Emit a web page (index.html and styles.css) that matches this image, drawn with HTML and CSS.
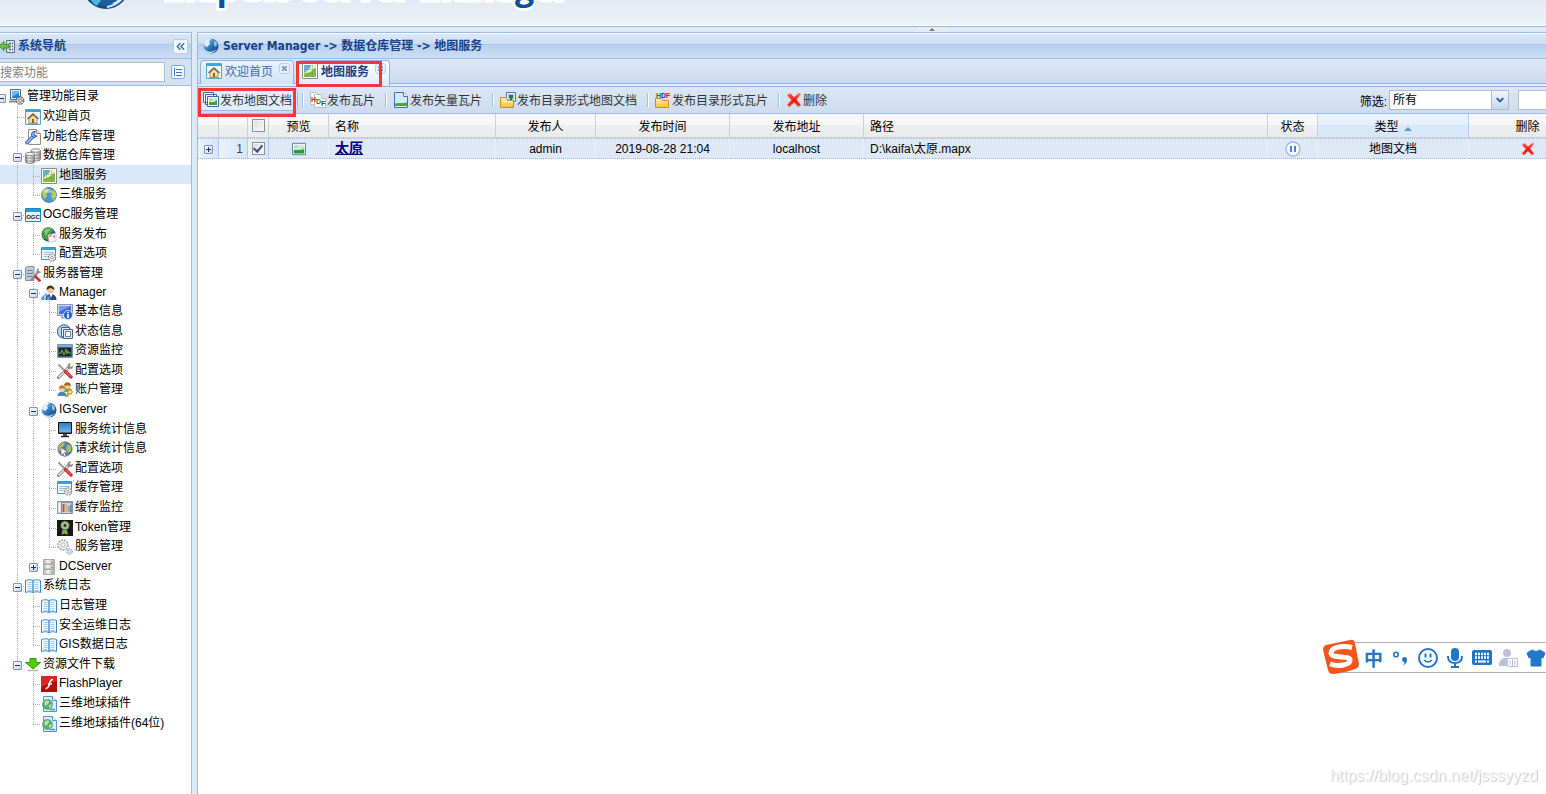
FILE: index.html
```html
<!DOCTYPE html>
<html lang="zh-CN">
<head>
  <meta charset="UTF-8" />
  <meta name="viewport" content="width=device-width, initial-scale=1.0"/>
  <title>MapGIS Server Manager</title>
  <link rel="stylesheet" href="styles.css">
</head>
<body>
  <!-- icon sprite -->
  <svg class="sprite" aria-hidden="true">
    <defs>
      <linearGradient id="g-globe" x1="0" y1="0" x2="1" y2="1"><stop offset="0" stop-color="#b9dcf6"/><stop offset=".5" stop-color="#2f78bd"/><stop offset="1" stop-color="#0d3a78"/></linearGradient>
      <linearGradient id="g-metal" x1="0" y1="0" x2="1" y2="0"><stop offset="0" stop-color="#8c8c8c"/><stop offset=".4" stop-color="#f4f4f4"/><stop offset="1" stop-color="#8f8f8f"/></linearGradient>
      <linearGradient id="g-rack" x1="0" y1="0" x2="1" y2="0"><stop offset="0" stop-color="#b5b5b5"/><stop offset=".4" stop-color="#f4f4f4"/><stop offset="1" stop-color="#adadad"/></linearGradient>
      <linearGradient id="g-folder" x1="0" y1="0" x2="0" y2="1"><stop offset="0" stop-color="#fff3b0"/><stop offset="1" stop-color="#f3bf3c"/></linearGradient>
      <linearGradient id="g-screen" x1="0" y1="0" x2="0" y2="1"><stop offset="0" stop-color="#2f7fc4"/><stop offset="1" stop-color="#6ab8f2"/></linearGradient>
      <linearGradient id="g-red" x1="0" y1="0" x2="0" y2="1"><stop offset="0" stop-color="#ff6b5c"/><stop offset=".5" stop-color="#f5160c"/><stop offset="1" stop-color="#e8392e"/></linearGradient>
    </defs>
    <symbol id="i-root" viewBox="0 0 16 16">
      <path d="M1.500.5h10v10h-10z" fill="#e8edf3" stroke="#5f6b7a"/><path d="M3 2h7v7H3z" fill="#1c7be0"/><path d="M3 2h7v2L3 8z" fill="#6cb6fa"/><path d="M0 12.500h8" stroke="#7d8a9a" stroke-width="2"/>
      <circle cx="11" cy="11.500" r="3.700" fill="#d7d7d7" stroke="#666" stroke-width="1.400" stroke-dasharray="2 1"/><circle cx="11" cy="11.500" r="1.500" fill="#fff" stroke="#777"/>
    </symbol>
    <symbol id="i-home" viewBox="0 0 16 16">
      <path d="M.5.5h15v15H.5z" fill="#eef5f9" stroke="#5ba0c8"/><path d="M1 1h14v2H1z" fill="#3ba4de"/><path d="M4 9.500V14h8V9.500L8 6z" fill="#f5e0a4" stroke="#a08a60" stroke-width=".8"/><path d="M2.500 10 8 5l5.500 5" fill="none" stroke="#7b603f" stroke-width="1.500"/><path d="M7 10h2v4H7z" fill="#8f5f2c"/><path d="M3 14.500h10" stroke="#8fae7c"/>
    </symbol>
    <symbol id="i-wrench" viewBox="0 0 16 16">
      <path d="M3.500.5h8l4 4v11h-12z" fill="#fcfcfc" stroke="#8e8e8e"/><path d="M11.500.5v4h4" fill="#e3e3e3" stroke="#8e8e8e"/><path d="M2 13.500 7.500 8" stroke="#2e5c9e" stroke-width="3.600" stroke-linecap="round"/><path d="M2 13.500 7.500 8" stroke="#8fbcf0" stroke-width="1.800" stroke-linecap="round"/><path d="M10.500 2.500a3 3 0 1 0 1.500 4.500L9.500 6.500 9 4.500z" fill="#8db6e8" stroke="#2e5c9e"/>
    </symbol>
    <symbol id="i-db" viewBox="0 0 16 16">
      <g stroke="#777" stroke-width=".8" fill="url(#g-metal)"><path d="M6 2.500v9c0 2 9.500 2 9.500 0v-9"/><ellipse cx="10.700" cy="2.500" rx="4.700" ry="1.800" fill="#eee"/><path d="M6 6c1 1.700 9 1.700 9.500 0M6 9c1 1.700 9 1.700 9.500 0" fill="none"/><path d="M.5 6v8c0 2 9 2 9 0V6"/><ellipse cx="5" cy="6" rx="4.500" ry="1.700" fill="#f5f5f5"/><path d="M.5 9c1 1.700 8 1.700 9 0M.5 12c1 1.700 8 1.700 9 0" fill="none"/></g>
    </symbol>
    <symbol id="i-map" viewBox="0 0 16 16">
      <path d="M.5.500h15v15H.5z" fill="#fff" stroke="#8b8b8b"/><path d="M2 2h12v12H2z" fill="#82bb46"/><path d="M2 2h7c0 3-1 4-3 5S4 9 2 10z" fill="#66aee8"/><path d="M9 2h5v3c-3 0-3 3-6 4s-3 2-6 2v-1c3-1 2-3 4-3.500S9 4 9 2z" fill="#f4efb8"/><path d="M5.500 2v12M10.500 2v12M2 6.500h12M2 10.500h12" stroke="#5f9a3a" stroke-width=".5" opacity=".7"/>
    </symbol>
    <symbol id="i-earth" viewBox="0 0 16 16">
      <circle cx="8" cy="8" r="7.500" fill="#4a97dc" stroke="#44749f" stroke-width=".8"/><path d="M2 4c2-3 5-3 6-2l-1 3-2 1 1 3-2 3C1 10 .5 7 2 4zM9 4l4-1c2 2 2.500 5 2 7l-3 3-2-4 1-2z" fill="#b5cf4e"/><ellipse cx="6.500" cy="4" rx="4" ry="2" fill="#fff" opacity=".4"/>
    </symbol>
    <symbol id="i-ogc" viewBox="0 0 16 16">
      <path d="M.5 1.500h15v13H.5z" fill="#f3f3f3" stroke="#1787bd"/><path d="M1 2h14v3H1z" fill="#1ba0dd"/><text class="glyph" x="8" y="12" font-size="6" text-anchor="middle" fill="#222">OGC</text>
    </symbol>
    <symbol id="i-publish" viewBox="0 0 16 16">
      <circle cx="7.500" cy="7.500" r="7" fill="#24549c"/><path d="M2 3C5-1 10 0 13 3L10 6 7 13 2 11C0 7 1 5 2 3z" fill="#4a9c3b"/><path d="M3 4c2-3 5-3 7-2L7 5 5 9z" fill="#8cca70"/><path d="m7 8 8-2v8l-7 1.500z" fill="#f8f8f8" stroke="#aaa" stroke-width=".6"/><path d="m8.500 9.500 2-1M12.500 8.500l1 2" stroke="#d33" stroke-width="1.200"/>
    </symbol>
    <symbol id="i-option" viewBox="0 0 16 16">
      <path d="M.5 1.500h14v12H.5z" fill="#f7fafc" stroke="#3f94c5"/><path d="M1 2h13v2H1z" fill="#35a4dd"/><path d="M2.500 6.500h10M2.500 8.500h6M2.500 10.500h4" stroke="#9dbdd2"/><circle cx="11" cy="11.500" r="3.600" fill="#e6e6e6" stroke="#888" stroke-width="1.200" stroke-dasharray="1.700 1"/><circle cx="11" cy="11.500" r="1.200" fill="#fff" stroke="#888" stroke-width=".7"/>
    </symbol>
    <symbol id="i-server" viewBox="0 0 16 16">
      <path d="M.5 1.500 3 .5h6v14H.5z" fill="#b9cadb" stroke="#7f92a6"/><path d="M2 4.500h5.500M2 7.500h5.500M2 10.500h5.500" stroke="#6d8298"/><path d="m6 14.500 8-9.500" stroke="#8a8a8a" stroke-width="2"/><path d="M13.500 2.500 12 5.500l3.500 1" fill="none" stroke="#8a8a8a" stroke-width="1.500"/><path d="m7 6 3 4" stroke="#aaa" stroke-width="1.500"/><path d="m10.500 10.500 4 4" stroke="#d3312a" stroke-width="2.800" stroke-linecap="round"/>
    </symbol>
    <symbol id="i-manager" viewBox="0 0 16 16">
      <path d="M4.500 15c0-5 3-6 5.500-6s5.500 2 5.500 6z" fill="#2e4672"/><path d="m8.500 9 1.500 4 1.500-4z" fill="#fff"/><circle cx="9.500" cy="5" r="3.500" fill="#f3c39a"/><path d="M5.500 5c-.5-6 8-6 8 0-2-1-3-2-4-2s-2 1-4 2z" fill="#4e2e1c"/><path d="M2 13v-2h6v2M5 9v2" fill="none" stroke="#4482c7"/><circle cx="5" cy="9.500" r="1.300" fill="#5cc4e6"/><circle cx="2" cy="13.500" r="1.800" fill="#3f9fe0"/><circle cx="7.500" cy="13.500" r="1.800" fill="#3f9fe0"/>
    </symbol>
    <symbol id="i-info" viewBox="0 0 16 16">
      <path d="M.5.500h15v11H.5z" fill="#d0d6e2" stroke="#8c96a8"/><path d="M2 2h12v8H2z" fill="#4365df"/><path d="M2 2h12L2 8z" fill="#7798f4"/><path d="M4 13.500h5" stroke="#9aa3b2" stroke-width="2"/><circle cx="11" cy="11" r="4.500" fill="#2468ce" stroke="#dce8fa" stroke-width=".8"/><path d="M11 10v4M11 8v1.200" stroke="#fff" stroke-width="1.600"/>
    </symbol>
    <symbol id="i-status" viewBox="0 0 16 16">
      <circle cx="7" cy="7.500" r="6.700" fill="#b5d2f0" stroke="#315f9b"/><path d="M4.500 3.500h8v9h-8z" fill="#e3edf7" stroke="#4f6480"/><path d="M6.500 5.500h9v9h-9z" fill="#dfeaf5" stroke="#4f6480"/><path d="M8.500 7.500h5v5h-5z" fill="#fff" stroke="#6d7f98"/>
    </symbol>
    <symbol id="i-monitor" viewBox="0 0 16 16">
      <path d="M.5 1.500h15v13H.5z" fill="#4e5e70" stroke="#7897b5"/><path d="M1 2h14v2H1z" fill="#84a9cc"/><path d="M2 5h12v8H2z" fill="#20262b"/><path d="M2 10h2l1-3 2 5 2-6 1 5 1-3 1 2h2" fill="none" stroke="#36c65b"/><path d="m4 11 2-2 2 2 3-4" fill="none" stroke="#cf3d35" stroke-width=".7"/>
    </symbol>
    <symbol id="i-tools" viewBox="0 0 16 16">
      <path d="M1.500 14.500 12 4" stroke="#777" stroke-width="3" stroke-linecap="round"/><path d="M1.500 14.500 12 4" stroke="#eee" stroke-width="1.400"/><path d="M13.500.8 11.500 2v3h3L15.500 3" fill="none" stroke="#888" stroke-width="1.600"/><path d="m1.500 1.500 6.500 6.500" stroke="#999" stroke-width="2"/><path d="m8.500 8.500 5.500 5.500" stroke="#cf2f2f" stroke-width="3.400" stroke-linecap="round"/><path d="m9 8.500 5 5" stroke="#f59b94" stroke-width=".8"/>
    </symbol>
    <symbol id="i-users" viewBox="0 0 16 16">
      <path d="M6 10c0-6 9-6 9 0z" fill="#63ac4b"/><circle cx="10.500" cy="4" r="3" fill="#f3c696"/><path d="M7 4c0-5 7-5 7 0-2-1-5-1-7 0z" fill="#a2622a"/><path d="M.5 14c0-6 9-6 9 0z" fill="#4484cf"/><circle cx="5" cy="7" r="3" fill="#f7d2a5"/><path d="M1.800 7c0-5 6.500-5 6.500 0-2-1-5-1-6.500 0z" fill="#be762f"/><circle cx="13" cy="10" r="2.300" fill="#ffe07c" stroke="#b07f16"/><path d="m11.500 11.500-3 3.500M10 13l1.500 1.500" stroke="#c4912a" stroke-width="1.500"/>
    </symbol>
    <symbol id="i-globe" viewBox="0 0 16 16">
      <circle cx="8" cy="8" r="7.500" fill="url(#g-globe)"/><path d="M2 3c2-2 4-2.500 6-2L6 4l1 2-3 3-3-2z" fill="#eef6fc" opacity=".9"/><path d="m11 3 2.500 1c1 2 0 4-1 5l-1.500-2z" fill="#eef6fc" opacity=".6"/><path d="M.8 10c2 4 8 5.500 13 1-3 5.500-11 6-13-1z" fill="#fff" opacity=".8"/>
    </symbol>
    <symbol id="i-screen" viewBox="0 0 16 16">
      <path d="M1.500.5h13v11h-13z" fill="#1d1f22" stroke="#111"/><path d="M2 1h12v9.500H2z" fill="url(#g-screen)"/><path d="M6 12h4v2H6z" fill="#555"/><path d="M4 14.500h8" stroke="#222" stroke-width="1.500"/>
    </symbol>
    <symbol id="i-request" viewBox="0 0 16 16">
      <circle cx="8" cy="8" r="7.200" fill="#4e78b9" stroke="#777" stroke-width=".8"/><path d="M2 5c2-4 5-4 6-3L7 5 4 7 3 11 1 8zM10 3l4 2v5l-3 2-2-4z" fill="#a3bf5c"/><path d="M4 6.500v8l2-2 1.500 3 1.500-1-1.500-3 3-.5z" fill="#f4f4f4" stroke="#777" stroke-width=".6"/>
    </symbol>
    <symbol id="i-cachemon" viewBox="0 0 16 16">
      <path d="M.5 1.500h15v12H.5z" fill="#c7d3de" stroke="#8799aa"/><path d="M4.500 2.500h10v11h-10z" fill="#cfd6e0" stroke="#6e7988" stroke-width=".7"/><path d="M6.500 4v8" stroke="#c4503f" stroke-width="2"/><path d="M9 4v8" stroke="#e5b47c" stroke-width="2"/><path d="M11.500 6v6" stroke="#7fb382" stroke-width="2"/><path d="M13.500 5v7" stroke="#5a86c6" stroke-width="1.400"/><path d="M2.500 3v9" stroke="#f4f7fa" stroke-width="2"/>
    </symbol>
    <symbol id="i-token" viewBox="0 0 16 16">
      <path d="M0 0h16v16H0z" fill="#171717"/><path d="m5.500 10-1 5 3-1.500 3.500 1.500-1-5z" fill="#78b832"/><circle cx="8" cy="5.500" r="4" fill="#b8c4ab" stroke="#6f8d58" stroke-width="1.400" stroke-dasharray="1.500 1"/><circle cx="8" cy="5.500" r="2" fill="#303030" stroke="#94c35c"/>
    </symbol>
    <symbol id="i-gears" viewBox="0 0 16 16">
      <circle cx="6" cy="6" r="5" fill="#eef1f4" stroke="#9aa8b5" stroke-width="1.500" stroke-dasharray="2.200 .8"/><circle cx="6" cy="6" r="2.200" fill="#fff" stroke="#a6b2be"/><circle cx="12.500" cy="12.500" r="2.800" fill="#e6edf4" stroke="#8097ae" stroke-dasharray="1.600 .7"/><circle cx="12.500" cy="12.500" r="1" fill="#fff" stroke="#8097ae" stroke-width=".6"/>
    </symbol>
    <symbol id="i-rack" viewBox="0 0 16 16">
      <path d="M2.500.5h11v4.500h-11zM2.500 5.500h11V10h-11zM2.500 10.500h11v5h-11z" fill="url(#g-rack)" stroke="#a9a9a9"/><path d="M10 3.500h2M10 8.500h2M10 13.500h2" stroke="#6fb562"/>
    </symbol>
    <symbol id="i-book" viewBox="0 0 16 16">
      <path d="M.5 2.500c2.500-1 5-1 7.500 0 2.500-1 5-1 7.500 0v12c-2.500-1-5-1-7.500 0-2.500-1-5-1-7.500 0z" fill="#f4faff" stroke="#3787cb"/><path d="M8 3v11" stroke="#3787cb" stroke-width="1.300"/><path d="M2.500 4.500h4M2.500 6.500h4M2.500 8.500h4M2.500 10.500h4M2.500 12.500h4M9.500 4.500h4M9.500 6.500h4M9.500 8.500h4M9.500 10.500h4M9.500 12.500h4" stroke="#a4cdf0"/>
    </symbol>
    <symbol id="i-download" viewBox="0 0 16 16">
      <path d="M5 1.500h6v4h4.500L8 12 .5 5.500H5z" fill="#4fd000" stroke="#369400"/><path d="M3 13.500h10" stroke="#b5b5b5" stroke-width="1.500"/>
    </symbol>
    <symbol id="i-flash" viewBox="0 0 16 16">
      <path d="M0 0h16v16H0z" fill="#b40c0c"/><path d="M0 0h16v5L0 11z" fill="#cf2a24"/><path d="M12 3.500c-4 0-3 4.500-4.500 7-.7 1.500-1.500 2-3 2M7 8h4" fill="none" stroke="#fff" stroke-width="1.700"/>
    </symbol>
    <symbol id="i-plugin" viewBox="0 0 16 16">
      <path d="M2.500.5h9l4 4v11h-13z" fill="#dceefb" stroke="#4b97d1"/><path d="M11.500.5v4h4" fill="#fff" stroke="#4b97d1"/><circle cx="6.500" cy="8.500" r="5" fill="#57b05d" stroke="#5f97a4" stroke-width=".8"/><path d="M3.500 6c2-2 4-1.500 5-1L7 8l-3 2zM8 9l3-1-1 3-2 1z" fill="#b4e3b0"/><path d="M9 13.500h5" stroke="#4b97d1" stroke-width="1.500"/>
    </symbol>
    <symbol id="i-nav" viewBox="0 0 16 16">
      <path d="M6.500 2.500h8v12h-8z" fill="#dae2ec" stroke="#5b7088"/><path d="M9 5.500h4M9 8.500h4M9 11.500h4" stroke="#4a5f78" stroke-width="1.400"/><path d="M11.500 3v11" stroke="#e4ebf2"/><path d="M9 6.500H4v-3L-1 8l5 4.500V10h5z" fill="#6bbd4d" stroke="#438d2d"/>
    </symbol>
    <symbol id="i-pic" viewBox="0 0 16 16">
      <path d="M.5 1.500h15v13H.5z" fill="#fff" stroke="#3c7d8d"/><path d="M2 3h12v10H2z" fill="#c8e8fb"/><path d="M2 9c4 0 7 1 12-2v6H2z" fill="#2f9b33"/><path d="M7 9c3-1 5-2 7-4v3c-2 1-4 1.500-7 1z" fill="#c9e05a"/><circle cx="4.500" cy="5.500" r="1.500" fill="#f6cf38"/>
    </symbol>
    <symbol id="i-pics" viewBox="0 0 16 16">
      <path d="M.5.5h10v10H.5zM2.500 2.500h11v10h-11z" fill="#f1f7fc" stroke="#336ea7"/><path d="M4.500 4.500h11v10h-11z" fill="#fff" stroke="#336ea7"/><path d="M6 6h8v7H6z" fill="#c8e8fb"/><path d="M6 10c3 0 5 1 8-2v5H6z" fill="#3da23d"/><circle cx="8" cy="7.800" r="1.300" fill="#f4be2d"/>
    </symbol>
    <symbol id="i-hdf" viewBox="0 0 16 16">
      <path d="M.5.5H6l3 3v9H.5z" fill="#fff" stroke="#bbb"/><path d="M4.500 2.500h7l4 4v9h-11z" fill="#fff" stroke="#bbb"/><path d="M11.500 2.500v4h4" fill="#ececec" stroke="#bbb"/><text class="glyph" x="1" y="10" font-size="7" fill="#c02a22">H</text><text class="glyph" x="6" y="12" font-size="7" fill="#2f7a2a">D</text><text class="glyph" x="11" y="14" font-size="7" fill="#273ea4">F</text>
    </symbol>
    <symbol id="i-vector" viewBox="0 0 16 16">
      <path d="M1.500.5h9l4 4v11h-13z" fill="#d7eafd" stroke="#3a73b8"/><path d="M10.500.5v4h4" fill="#fff" stroke="#3a73b8"/><path d="M2 11.500c4-1 8 0 12-1V14H2z" fill="#4fa53c"/><path d="M2 14.500h12" stroke="#e9f6e0"/>
    </symbol>
    <symbol id="i-folderpic" viewBox="0 0 16 16">
      <path d="M6.500.5h9v9h-9z" fill="#e8f2fb" stroke="#4b78b2"/><path d="M8 2h6v6H8z" fill="#9fcdf0"/><path d="M9 3h4v3H9zM10 6h2v2h-2z" fill="#2f7d33"/><path d="M.5 5.500v10h13v-7h-6l-1-3z" fill="url(#g-folder)" stroke="#c98d26"/><path d="M4 9.500h9" stroke="#fffbe0"/>
    </symbol>
    <symbol id="i-folderhdf" viewBox="0 0 16 16">
      <path d="M.5 6.500v9h13v-7h-6l-1-2z" fill="url(#g-folder)" stroke="#c98d26"/><text class="glyph" x="1" y="6" font-size="7" fill="#1c7c1a">H</text><text class="glyph" x="6" y="6" font-size="7" fill="#1428c0">D</text><text class="glyph" x="11" y="6" font-size="7" fill="#e0120b">F</text>
    </symbol>
    <symbol id="i-delete" viewBox="0 0 16 16">
      <path d="M1 3.500 4 1l4 4L13 1l2 1L10.500 7.500 15 13l-2.500 2L8 10.500 3.500 15 1 13l4.500-5z" fill="url(#g-red)" stroke="#f0a29b" stroke-width=".5"/>
    </symbol>
    <symbol id="i-pause" viewBox="0 0 16 16">
      <circle cx="8" cy="8" r="7" fill="#f6faff" stroke="#9bb9e0" stroke-width="1.300"/><path d="M6 5v6M10 5v6" stroke="#4c86d0" stroke-width="2"/>
    </symbol>
  </svg>

  <header class="banner">
    <svg class="logo" viewBox="0 0 46 46" aria-hidden="true"><circle cx="23" cy="23" r="23" fill="#174b8d"/><circle cx="23" cy="23" r="20" fill="#1c5c9f"/><path d="M6 28c6-3 8 4 12 6 2 3-3 6-4 9C9 40 5 35 6 28z" fill="#49b9df"/><path d="M24 44c8-1 14-6 19-13M30 41c5-2 9-6 11-11" fill="none" stroke="#d5ecf8" stroke-width="2"/></svg>
    <h1>MapGIS Server Manager</h1>
  </header>
  <div class="split-top"><button class="collapse-top" type="button" aria-label="折叠"></button></div>

  <div class="viewport">
    <aside class="sidebar">
      <div class="panel-head">
        <svg class="icon"><use href="#i-nav"/></svg>
        <h2>系统导航</h2>
        <button class="collapse" type="button" aria-label="收起"><svg viewBox="0 0 14 14"><path d="M7 3.500 3.500 7 7 10.500M11 3.500 7.500 7l3.500 3.500" fill="none" stroke="#3b68ac" stroke-width="1.500"/></svg></button>
      </div>
      <div class="search">
        <input type="text" placeholder="搜索功能" aria-label="搜索功能">
        <button type="button" aria-label="列表"><svg viewBox="0 0 14 14"><rect x=".5" y=".5" width="13" height="13" rx="2" fill="#f5f9fe" stroke="#8aa5ce"/><path d="M3.500 3v8M5 4.500h6M5 7.500h6M5 10.500h6" stroke="#4478bd"/></svg></button>
      </div>
      <ul class="tree">
        <li><i class="box"></i><svg class="icon"><use href="#i-root"/></svg><a href="#">管理功能目录</a></li>
        <li><i></i><i class="tee"></i><svg class="icon"><use href="#i-home"/></svg><a href="#">欢迎首页</a></li>
        <li><i></i><i class="tee"></i><svg class="icon"><use href="#i-wrench"/></svg><a href="#">功能仓库管理</a></li>
        <li><i></i><i class="tee box"></i><svg class="icon"><use href="#i-db"/></svg><a href="#">数据仓库管理</a></li>
        <li class="selected"><i></i><i class="line"></i><i class="tee"></i><svg class="icon"><use href="#i-map"/></svg><a href="#">地图服务</a></li>
        <li><i></i><i class="line"></i><i class="end"></i><svg class="icon"><use href="#i-earth"/></svg><a href="#">三维服务</a></li>
        <li><i></i><i class="tee box"></i><svg class="icon"><use href="#i-ogc"/></svg><a href="#">OGC服务管理</a></li>
        <li><i></i><i class="line"></i><i class="tee"></i><svg class="icon"><use href="#i-publish"/></svg><a href="#">服务发布</a></li>
        <li><i></i><i class="line"></i><i class="end"></i><svg class="icon"><use href="#i-option"/></svg><a href="#">配置选项</a></li>
        <li><i></i><i class="tee box"></i><svg class="icon"><use href="#i-server"/></svg><a href="#">服务器管理</a></li>
        <li><i></i><i class="line"></i><i class="tee box"></i><svg class="icon"><use href="#i-manager"/></svg><a href="#">Manager</a></li>
        <li><i></i><i class="line"></i><i class="line"></i><i class="tee"></i><svg class="icon"><use href="#i-info"/></svg><a href="#">基本信息</a></li>
        <li><i></i><i class="line"></i><i class="line"></i><i class="tee"></i><svg class="icon"><use href="#i-status"/></svg><a href="#">状态信息</a></li>
        <li><i></i><i class="line"></i><i class="line"></i><i class="tee"></i><svg class="icon"><use href="#i-monitor"/></svg><a href="#">资源监控</a></li>
        <li><i></i><i class="line"></i><i class="line"></i><i class="tee"></i><svg class="icon"><use href="#i-tools"/></svg><a href="#">配置选项</a></li>
        <li><i></i><i class="line"></i><i class="line"></i><i class="end"></i><svg class="icon"><use href="#i-users"/></svg><a href="#">账户管理</a></li>
        <li><i></i><i class="line"></i><i class="tee box"></i><svg class="icon"><use href="#i-globe"/></svg><a href="#">IGServer</a></li>
        <li><i></i><i class="line"></i><i class="line"></i><i class="tee"></i><svg class="icon"><use href="#i-screen"/></svg><a href="#">服务统计信息</a></li>
        <li><i></i><i class="line"></i><i class="line"></i><i class="tee"></i><svg class="icon"><use href="#i-request"/></svg><a href="#">请求统计信息</a></li>
        <li><i></i><i class="line"></i><i class="line"></i><i class="tee"></i><svg class="icon"><use href="#i-tools"/></svg><a href="#">配置选项</a></li>
        <li><i></i><i class="line"></i><i class="line"></i><i class="tee"></i><svg class="icon"><use href="#i-option"/></svg><a href="#">缓存管理</a></li>
        <li><i></i><i class="line"></i><i class="line"></i><i class="tee"></i><svg class="icon"><use href="#i-cachemon"/></svg><a href="#">缓存监控</a></li>
        <li><i></i><i class="line"></i><i class="line"></i><i class="tee"></i><svg class="icon"><use href="#i-token"/></svg><a href="#">Token管理</a></li>
        <li><i></i><i class="line"></i><i class="line"></i><i class="end"></i><svg class="icon"><use href="#i-gears"/></svg><a href="#">服务管理</a></li>
        <li><i></i><i class="line"></i><i class="end box plus"></i><svg class="icon"><use href="#i-rack"/></svg><a href="#">DCServer</a></li>
        <li><i></i><i class="tee box"></i><svg class="icon"><use href="#i-book"/></svg><a href="#">系统日志</a></li>
        <li><i></i><i class="line"></i><i class="tee"></i><svg class="icon"><use href="#i-book"/></svg><a href="#">日志管理</a></li>
        <li><i></i><i class="line"></i><i class="tee"></i><svg class="icon"><use href="#i-book"/></svg><a href="#">安全运维日志</a></li>
        <li><i></i><i class="line"></i><i class="end"></i><svg class="icon"><use href="#i-book"/></svg><a href="#">GIS数据日志</a></li>
        <li><i></i><i class="end box"></i><svg class="icon"><use href="#i-download"/></svg><a href="#">资源文件下载</a></li>
        <li><i></i><i></i><i class="tee"></i><svg class="icon"><use href="#i-flash"/></svg><a href="#">FlashPlayer</a></li>
        <li><i></i><i></i><i class="tee"></i><svg class="icon"><use href="#i-plugin"/></svg><a href="#">三维地球插件</a></li>
        <li><i></i><i></i><i class="end"></i><svg class="icon"><use href="#i-plugin"/></svg><a href="#">三维地球插件(64位)</a></li>
      </ul>
    </aside>

    <main class="content">
      <div class="panel-head">
        <svg class="icon"><use href="#i-globe"/></svg>
        <h2>Server Manager -&gt; 数据仓库管理 -&gt; 地图服务</h2>
      </div>
      <nav class="tabs">
        <div class="tab"><svg class="icon"><use href="#i-home"/></svg><a href="#">欢迎首页</a><button type="button" class="close" aria-label="关闭"></button></div>
        <div class="tab active"><svg class="icon"><use href="#i-map"/></svg><a href="#">地图服务</a><button type="button" class="close" aria-label="关闭"></button></div>
        <span class="mark mark-tab"></span>
      </nav>
      <div class="toolbar">
        <button type="button" class="over"><svg class="icon"><use href="#i-pics"/></svg>发布地图文档</button>
        <button type="button"><svg class="icon"><use href="#i-hdf"/></svg>发布瓦片</button>
        <button type="button"><svg class="icon"><use href="#i-vector"/></svg>发布矢量瓦片</button>
        <button type="button"><svg class="icon"><use href="#i-folderpic"/></svg>发布目录形式地图文档</button>
        <button type="button"><svg class="icon"><use href="#i-folderhdf"/></svg>发布目录形式瓦片</button>
        <button type="button"><svg class="icon"><use href="#i-delete"/></svg>删除</button>
        <div class="filter">
          <label for="type">筛选:</label>
          <span class="combo">
            <select id="type"><option>所有</option><option>地图文档</option></select>
            <svg viewBox="0 0 17 18"><path d="m5 7 3.500 3.500L12 7" fill="none" stroke="#34568f" stroke-width="2"/></svg>
          </span>
          <input type="text" class="keyword" aria-label="关键字">
        </div>
        <span class="mark mark-btn"></span>
      </div>
      <table class="grid">
        <colgroup><col class="c-exp"><col class="c-num"><col class="c-exp"><col class="c-view"><col class="c-name"><col class="c-user"><col class="c-mid"><col class="c-mid"><col><col class="c-state"><col class="c-type"><col class="c-del"></colgroup>
        <thead>
          <tr><th></th><th></th><th><input type="checkbox" aria-label="全选"></th><th>预览</th><th class="left">名称</th><th>发布人</th><th>发布时间</th><th>发布地址</th><th class="left">路径</th><th>状态</th><th class="sorted">类型<span class="asc"></span></th><th>删除</th></tr>
        </thead>
        <tbody>
          <tr>
            <td class="special"><i class="box plus"></i></td>
            <td class="special num">1</td>
            <td class="special"><input type="checkbox" aria-label="选择 太原" checked></td>
            <td><svg class="icon"><use href="#i-pic"/></svg></td>
            <td class="left"><a class="name" href="#">太原</a></td>
            <td>admin</td>
            <td>2019-08-28 21:04</td>
            <td>localhost</td>
            <td class="left">D:\kaifa\太原.mapx</td>
            <td><svg class="icon big"><use href="#i-pause"/></svg></td>
            <td>地图文档</td>
            <td><svg class="icon"><use href="#i-delete"/></svg></td>
          </tr>
        </tbody>
      </table>
    </main>
  </div>

  <!-- input method bar -->
  <div class="ime">
    <svg class="ime-logo" viewBox="0 0 36 36"><path d="M3 6 27 1q4-1 5 3l4 21q0 4-4 5-10 4-22 5-4 0-5-4L0 11q0-4 3-5z" fill="#f4551d"/><path d="M29 8.500C18 6 8 9 8 14c0 6 19 2 19 7 0 5-11 7-20 4" fill="none" stroke="#fff" stroke-width="5"/></svg>
    <span class="ime-lang">中</span>
    <svg viewBox="0 0 20 20"><circle cx="5" cy="6.500" r="2.300" fill="none" stroke="#2176c7" stroke-width="1.600"/><path d="M11 11.500a2.500 2.500 0 1 1 5 0q0 4.500-4 6 1.700-2 1.400-3.500-2.400 0-2.400-2.500z" fill="#2176c7"/></svg>
    <svg viewBox="0 0 20 20"><circle cx="10" cy="10" r="9" fill="none" stroke="#2176c7" stroke-width="2"/><path d="M7.500 5.500v4M12.500 5.500v4" stroke="#2176c7" stroke-width="2"/><path d="M6 12q4 4 8 0" fill="none" stroke="#2176c7" stroke-width="1.600"/></svg>
    <svg viewBox="0 0 20 20"><rect x="6" y="0" width="8" height="13" rx="4" fill="#2176c7"/><path d="M3 8q0 7 7 7t7-7M10 15v4M6 19h8" fill="none" stroke="#2176c7" stroke-width="2"/></svg>
    <svg viewBox="0 0 20 20"><rect x="0" y="2" width="20" height="15" rx="2" fill="#2176c7"/><path d="M3 6h14M3 9.500h14" stroke="#fff" stroke-width="2.500" stroke-dasharray="2 1"/><path d="M3 13.500h2M6 13.500h8M15 13.500h2" stroke="#fff" stroke-width="2"/></svg>
    <svg viewBox="0 0 20 20"><circle cx="8" cy="5" r="4" fill="#b9c2d8"/><path d="M0 18q0-8 6-8h5v8z" fill="#b9c2d8"/><path d="M8.500 10.500h5v8h-5zM13.500 10.500h5v8h-5z" fill="#fff" stroke="#b9c2d8"/><path d="M10 13h1v4M15 13h1v4" fill="none" stroke="#b9c2d8"/></svg>
    <svg viewBox="0 0 20 20"><path d="M6 2q4 3 8 0l5 3-2 5-2-1v9H5V9l-2 1-2-5z" fill="#2176c7" stroke="#2176c7" stroke-linejoin="round"/></svg>
  </div>
  <div class="watermark">https://blog.csdn.net/jsssyyzd</div>
</body>
</html>
```
FILE: styles.css
```css
*,
*::before,
*::after {
  box-sizing: border-box;
}
body {
  margin: 0;
  height: 100vh;
  display: flex;
  flex-direction: column;
  overflow: hidden;
  background: #dfe8f6;
  font-family: "Liberation Sans", "Noto Sans CJK SC", sans-serif;
  font-size: 12px;
  color: #000;
}
a {
  color: inherit;
  text-decoration: none;
}
button {
  padding: 0;
  border: 0;
  background: none;
  font: inherit;
  color: inherit;
  cursor: pointer;
}
.sprite {
  position: absolute;
  width: 0;
  height: 0;
}
.icon {
  width: 16px;
  height: 16px;
  flex: none;
}
.glyph {
  font-family: "Liberation Sans", sans-serif;
  font-weight: bold;
}

/* banner */
.banner {
  flex: none;
  display: flex;
  align-items: flex-end;
  height: 26px;
  padding-left: 83px;
  overflow: hidden;
  background: linear-gradient(#e3eaf5, #edf1f8);
  border-bottom: 1px solid #fff;
}
.logo {
  flex: none;
  width: 46px;
  height: 46px;
  margin-bottom: 16px;
}
.banner h1 {
  margin: 0 0 16px 35px;
  font: bold 34px/44px "Open Sans", sans-serif;
  white-space: nowrap;
  color: #0a539c;
  -webkit-text-stroke: 5px #fff;
  paint-order: stroke fill;
}
.split-top {
  flex: none;
  display: flex;
  justify-content: center;
  height: 6px;
  padding-left: 317px;
  border-top: 1px solid #99bbe8;
}
.collapse-top {
  display: flex;
  align-items: center;
  justify-content: center;
  width: 35px;
  height: 5px;
  background: #e9edf0;
  clip-path: polygon(4px 0, 31px 0, 100% 100%, 0 100%);
}
.collapse-top::after {
  content: "";
  border: 3px solid transparent;
  border-top: 0;
  border-bottom-color: #777;
}

.viewport {
  flex: 1;
  display: flex;
  gap: 5px;
  min-height: 0;
}
.sidebar {
  flex: none;
  display: flex;
  flex-direction: column;
  width: 192px;
  background: #fff;
  border-top: 1px solid #99bbe8;
  border-right: 1px solid #99bbe8;
  overflow: hidden;
}
.content {
  flex: 1;
  min-width: 0;
  overflow: hidden;
  background: #fff;
  border-top: 1px solid #99bbe8;
  border-left: 1px solid #99bbe8;
}
.panel-head {
  flex: none;
  display: flex;
  align-items: center;
  gap: 4px;
  height: 26px;
  padding: 0 3px 0 5px;
  border-top: 1px solid #fff;
  border-bottom: 1px solid #99bbe8;
  background: linear-gradient(#dae7f6 0, #cddef3 10px, #abc7ec 10px, #abc7ec 11px, #b8cfee 11px, #cddef3 100%);
  color: #15428b;
}
.panel-head h2 {
  flex: 1;
  margin: 0;
  font: bold 12px/16px "DejaVu Sans Condensed", "Noto Sans CJK SC", sans-serif;
}
.sidebar .panel-head {
  padding-left: 0;
  gap: 2px;
}
.collapse {
  width: 15px;
  height: 15px;
  border: 1px solid #b5cdf0;
  border-radius: 2px;
  background: #f3f8fe;
}
.collapse svg,
.search button svg {
  display: block;
  width: 100%;
  height: 100%;
}

/* search box */
.search {
  flex: none;
  display: flex;
  align-items: center;
  gap: 6px;
  height: 27px;
  background: #d3e1f1;
  border-bottom: 1px solid #99bbe8;
}
.search input {
  width: 165px;
  height: 20px;
  padding: 1px 0 0;
  border: 1px solid #b5b8c8;
  border-left: 0;
  font: inherit;
}
.search input::placeholder {
  color: #808080;
}
.search button {
  width: 14px;
  height: 14px;
}

/* tree */
.tree {
  margin: 0 0 0 -7px;
  padding: 0;
  list-style: none;
}
.tree li {
  display: flex;
  align-items: center;
  height: 20px;
  white-space: nowrap;
}
.tree li:nth-child(5n+3),
.tree li:nth-child(5n),
.tree li:nth-child(11) {
  height: 19px;
}
.tree .selected {
  background: #d9e8fb;
}
.tree i {
  flex: none;
  display: flex;
  align-items: center;
  justify-content: center;
  align-self: stretch;
  width: 16px;
  background-repeat: no-repeat;
}
.tree .line {
  background-image: repeating-linear-gradient(#aaa 0 1px, transparent 1px 2px);
  background-size: 1px 100%;
  background-position: 8px 0;
}
.tree .tee,
.tree .end {
  background-image: repeating-linear-gradient(#aaa 0 1px, transparent 1px 2px), repeating-linear-gradient(90deg, #aaa 0 1px, transparent 1px 2px);
  background-size: 1px 100%, 8px 1px;
  background-position: 8px 0, 8px 11px;
}
.tree .end {
  background-size: 1px 11px, 8px 1px;
}
.tree .icon {
  margin-top: 2px;
}
.tree a {
  padding-left: 2px;
  line-height: 18px;
}
.box::before {
  content: "";
  display: block;
  width: 9px;
  height: 9px;
  border: 1px solid #7b96ba;
  border-radius: 1px;
  background: linear-gradient(#26364d, #26364d) 50% 50% / 5px 1px no-repeat, linear-gradient(135deg, #fff, #c6d3e6);
}
.box.plus::before {
  background: linear-gradient(#26364d, #26364d) 50% 50% / 5px 1px no-repeat, linear-gradient(#26364d, #26364d) 50% 50% / 1px 5px no-repeat, linear-gradient(135deg, #fff, #c6d3e6);
}
.tree .box::before {
  margin: 4px 0 0 1px;
}

/* tabs */
.tabs {
  position: relative;
  display: flex;
  align-items: flex-start;
  gap: 3px;
  height: 28px;
  padding: 1px 2px 0;
  background: linear-gradient(#dde8f5 0, #cbdbef 24px, #8db2e3 24px, #8db2e3 25px, #deecfd 25px, #deecfd 27px, #8db2e3 27px);
}
.tab {
  display: flex;
  align-items: flex-start;
  gap: 3px;
  height: 24px;
  padding: 2px 3px 0 5px;
  border: 1px solid #8db2e3;
  border-bottom: 0;
  border-radius: 4px 4px 0 0;
  background: linear-gradient(#e9f2fd, #d3e3f7);
  color: #416aa3;
}
.tab.active {
  height: 26px;
  padding: 2px 3px 0 4px;
  background: linear-gradient(#fff, #deecfd);
  color: #15428b;
  font-weight: bold;
}
.tab a {
  line-height: 18px;
}
.close {
  width: 11px;
  height: 11px;
  margin-left: 3px;
  border: 1px solid #b5cdeb;
  border-radius: 3px;
  background:
    linear-gradient(45deg, transparent 38%, #7f9fca 38% 62%, transparent 62%) 50% / 5px 5px no-repeat,
    linear-gradient(135deg, transparent 38%, #7f9fca 38% 62%, transparent 62%) 50% / 5px 5px no-repeat,
    #e7f0fb;
}

/* red frames over the tab and the button */
.mark {
  position: absolute;
  z-index: 2;
  border: 3px solid #fb3434;
  pointer-events: none;
}
.mark-tab {
  left: 98px;
  top: 2px;
  width: 86px;
  height: 26px;
}
.mark-btn {
  left: 0;
  top: 1px;
  width: 98px;
  height: 29px;
}

/* toolbar */
.toolbar {
  position: relative;
  display: flex;
  align-items: center;
  height: 27px;
  padding-left: 1px;
  background: linear-gradient(#dbe7f6, #cddcef);
  border-bottom: 1px solid #99bbe8;
  color: #333;
  white-space: nowrap;
}
.toolbar > button {
  display: flex;
  align-items: center;
  gap: 1px;
  height: 22px;
  padding: 0 5px 1px 3px;
  border: 1px solid transparent;
  border-radius: 3px;
}
.toolbar > button + button {
  margin-left: 8px;
}
.toolbar > button + button::before {
  content: "";
  width: 2px;
  height: 14px;
  margin: 0 5px 0 -8px;
  background: linear-gradient(90deg, #98c0f4 50%, #fff 50%);
}
.toolbar .over {
  border-color: #9ebae1;
  background: #ddeffe;
}
.filter {
  display: flex;
  align-items: center;
  margin-left: auto;
  margin-right: -80px;
  color: #000;
}
.combo {
  position: relative;
  margin: 0 9px 0 2px;
}
.combo select {
  display: block;
  width: 120px;
  height: 20px;
  padding: 0 3px;
  border: 1px solid #b5b8c8;
  border-radius: 0;
  background: #fff;
  appearance: none;
  font: inherit;
}
.combo svg {
  position: absolute;
  right: 1px;
  top: 1px;
  width: 17px;
  height: 18px;
  border-left: 1px solid #b5b8c8;
  background: linear-gradient(#f1f6fc, #c5d7ef);
  pointer-events: none;
}
.keyword {
  width: 108px;
  height: 20px;
  border: 1px solid #b5b8c8;
}

/* grid, last column runs past the right edge */
.grid {
  width: calc(100% + 41px);
  table-layout: fixed;
  border-collapse: separate;
  border-spacing: 0;
}
.c-exp { width: 21px; }
.c-num { width: 29px; }
.c-view { width: 60px; }
.c-name { width: 167px; }
.c-user { width: 100px; }
.c-mid { width: 134px; }
.c-state { width: 50px; }
.c-type { width: 151px; }
.c-del { width: 118px; }
.grid th,
.grid td {
  padding: 0;
  text-align: center;
  font-weight: normal;
  white-space: nowrap;
}
.grid th {
  height: 24px;
  border-right: 1px solid #d0d0d0;
  border-bottom: 1px solid #d0d0d0;
  background: linear-gradient(#f9f9f9 0, #f6f6f6 11px, #eeeff0 11px, #eaebec 100%);
}
.grid .sorted {
  border-right-color: #aaccf6;
  background: linear-gradient(#ebf3fd 0, #e5f0fc 11px, #d8e7fa 11px, #d9e8fb 100%);
}
.asc {
  display: inline-block;
  margin-left: 5px;
  border: 4px solid transparent;
  border-top: 0;
  border-bottom-color: #6593cf;
}
.grid td {
  height: 21px;
  border-right: 1px solid #ededed;
  border-top: 1px dotted #a3bae9;
  border-bottom: 1px dotted #a3bae9;
  background: #dfe8f6;
  line-height: 18px;
}
.grid .left {
  padding-left: 6px;
  text-align: left;
}
.grid .special {
  border-right-color: #aaccf6;
  background: linear-gradient(90deg, #e9f2fd, #d7e6f9);
}
.grid .num {
  padding-right: 4px;
  text-align: right;
  color: #444;
}
.grid .box::before {
  margin: 1px auto 0;
}
.grid .icon {
  display: block;
  width: 14px;
  height: 14px;
  margin: 0 auto;
}
.grid .icon.big {
  width: 16px;
  height: 16px;
}
.grid input {
  display: block;
  width: 13px;
  height: 13px;
  margin: 0 auto;
  border: 1px solid #8e8f8f;
  background: linear-gradient(135deg, #d5d8dc, #fafafa);
  box-shadow: inset 0 0 0 1px #f4f4f4;
  appearance: none;
}
.grid input:checked::before {
  content: "";
  display: block;
  width: 6px;
  height: 9px;
  margin: 0 auto;
  border: solid #3a4f90;
  border-width: 0 2px 2px 0;
  transform: rotate(40deg);
}
.name {
  font-size: 14px;
  font-weight: bold;
  color: #000080;
  text-decoration: underline;
}

/* input method bar and watermark float over the page */
.ime {
  position: fixed;
  right: 0;
  bottom: 121px;
  display: flex;
  align-items: center;
  gap: 7px;
  height: 31px;
  background: #fff;
  border: solid #b0b1bb;
  border-width: 1px 0;
}
.ime svg {
  flex: none;
  width: 20px;
  height: 20px;
}
.ime .ime-logo {
  width: 36px;
  height: 36px;
  margin: 0 -2px 2px -20px;
}
.ime-lang {
  width: 20px;
  font: bold 19px/30px "Noto Sans CJK SC", sans-serif;
  color: #2176c7;
}
.watermark {
  position: fixed;
  right: 8px;
  bottom: 9px;
  font-size: 16px;
  line-height: 18px;
  color: #f4f4f4;
  text-shadow: 1px 1px 1px #ccc;
}
```
